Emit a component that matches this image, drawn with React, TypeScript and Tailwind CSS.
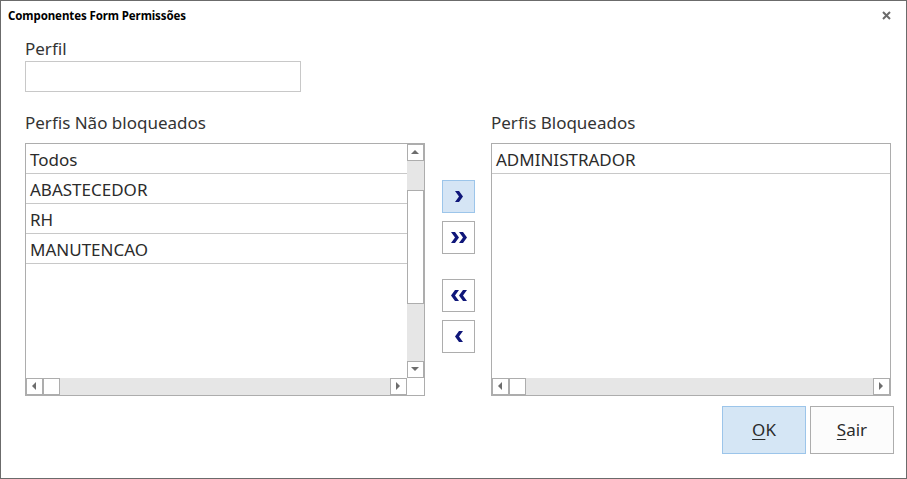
import React from 'react';

const font = { fontFamily: '"Noto Sans", "Open Sans", sans-serif' };

const leftItems = ['Todos', 'ABASTECEDOR', 'RH', 'MANUTENCAO'];
const rightItems = ['ADMINISTRADOR'];

function Tri({ dir }: { dir: 'up' | 'down' | 'left' | 'right' }) {
  const pts = {
    up: '0,4 4,0 8,4',
    down: '0,0 8,0 4,4',
    left: '4,0 4,8 0,4',
    right: '0,0 0,8 4,4',
  }[dir];
  const horiz = dir === 'left' || dir === 'right';
  return (
    <svg width={horiz ? 5 : 9} height={horiz ? 9 : 5} viewBox={horiz ? '0 0 5 9' : '0 0 9 5'}>
      <polygon points={pts} fill="#6d6d6d" />
    </svg>
  );
}

function ScrollBtn({ dir }: { dir: 'up' | 'down' | 'left' | 'right' }) {
  return (
    <div className="w-[17px] h-[17px] shrink-0 bg-white border border-[#adadad] flex items-center justify-center">
      <Tri dir={dir} />
    </div>
  );
}

function HScroll({ flexEnd }: { flexEnd?: boolean }) {
  return (
    <div className="h-[17px] flex bg-[#e6e6e6]">
      <ScrollBtn dir="left" />
      <div className="w-[17px] h-[17px] bg-white border border-[#adadad]" />
      <div className="flex-1" />
      <ScrollBtn dir="right" />
      {flexEnd && <div className="w-[17px] h-[17px] bg-white" />}
    </div>
  );
}

function Rows({ items }: { items: string[] }) {
  return (
    <div className="flex flex-col">
      {items.map((t) => (
        <div key={t} className="h-[30px] border-b border-[#c8c8c8] pl-[4px] pt-[2px] flex items-center text-[17px] text-[#2b2b2b]">
          {t}
        </div>
      ))}
    </div>
  );
}

function Chevron({ double, left }: { double?: boolean; left?: boolean }) {
  const one = 'M0,0 L4,0 L8,5.5 L4,11 L0,11 L4,5.5 Z';
  return (
    <svg width={double ? 16 : 8} height={11} viewBox={double ? '0 0 16 11' : '0 0 8 11'} style={{ transform: left ? 'scaleX(-1)' : undefined }}>
      <path d={one} fill="#10177a" />
      {double && <path d={one} transform="translate(8,0)" fill="#10177a" />}
    </svg>
  );
}

function MoveBtn({ children, active }: { children: React.ReactNode; active?: boolean }) {
  return (
    <div
      className={`w-[33px] h-[33px] flex items-center justify-center border ${
        active ? 'bg-[#d5e5f5] border-[#9cc5ea]' : 'bg-white border-[#adadad]'
      }`}
    >
      {children}
    </div>
  );
}

export default function App() {
  return (
    <div className="w-[907px] h-[479px] bg-white border border-[#6b6b6b] flex flex-col" style={font}>
      <div className="h-[29px] flex items-center justify-between pl-[7px] pr-[15px]">
        <span className="text-[11.5px] font-bold text-black tracking-[-0.1px]">Componentes Form Permissões</span>
        <svg width="9" height="9" viewBox="0 0 9 9">
          <path d="M1,1 L8,8 M8,1 L1,8" stroke="#6b6b6b" strokeWidth="2" />
        </svg>
      </div>

      <div className="pl-[24px] pr-[12px] flex flex-col flex-1">
        <div className="h-[31px] flex items-center text-[17px] text-[#333] pt-[6px]">Perfil</div>
        <div className="w-[276px] h-[31px] border border-[#c8c8c8]" />

        <div className="flex mt-[21px]">
          <div className="w-[400px] flex flex-col">
            <div className="h-[30px] text-[17px] text-[#333] leading-[20px]">Perfis Não bloqueados</div>
            <div className="h-[253px] border border-[#adadad] flex flex-col">
              <div className="flex flex-1 min-h-0">
                <div className="flex-1">
                  <Rows items={leftItems} />
                </div>
                <div className="w-[17px] flex flex-col bg-[#e6e6e6]">
                  <ScrollBtn dir="up" />
                  <div className="h-[29px]" />
                  <div className="h-[114px] bg-white border border-[#adadad]" />
                  <div className="flex-1" />
                  <ScrollBtn dir="down" />
                </div>
              </div>
              <HScroll flexEnd />
            </div>
          </div>

          <div className="ml-[17px] mt-[67px] flex flex-col">
            <MoveBtn active>
              <Chevron />
            </MoveBtn>
            <div className="mt-[8px]">
              <MoveBtn>
                <Chevron double />
              </MoveBtn>
            </div>
            <div className="mt-[25px]">
              <MoveBtn>
                <Chevron double left />
              </MoveBtn>
            </div>
            <div className="mt-[8px]">
              <MoveBtn>
                <Chevron left />
              </MoveBtn>
            </div>
          </div>

          <div className="ml-[16px] w-[400px] flex flex-col">
            <div className="h-[30px] text-[17px] text-[#333] leading-[20px]">Perfis Bloqueados</div>
            <div className="h-[253px] border border-[#adadad] flex flex-col">
              <div className="flex-1">
                <Rows items={rightItems} />
              </div>
              <HScroll />
            </div>
          </div>
        </div>

        <div className="flex justify-end gap-[4px] mt-[10px]">
          <button className="w-[84px] h-[48px] bg-[#d5e6f5] border border-[#9cc5ea] text-[17px] text-[#2b2b2b]">
            <span className="underline underline-offset-[3px] decoration-1">O</span>K
          </button>
          <button className="w-[84px] h-[48px] bg-[#fcfcfc] border border-[#adadad] text-[17px] text-[#2b2b2b]">
            <span className="underline underline-offset-[3px] decoration-1">S</span>air
          </button>
        </div>
      </div>
    </div>
  );
}
